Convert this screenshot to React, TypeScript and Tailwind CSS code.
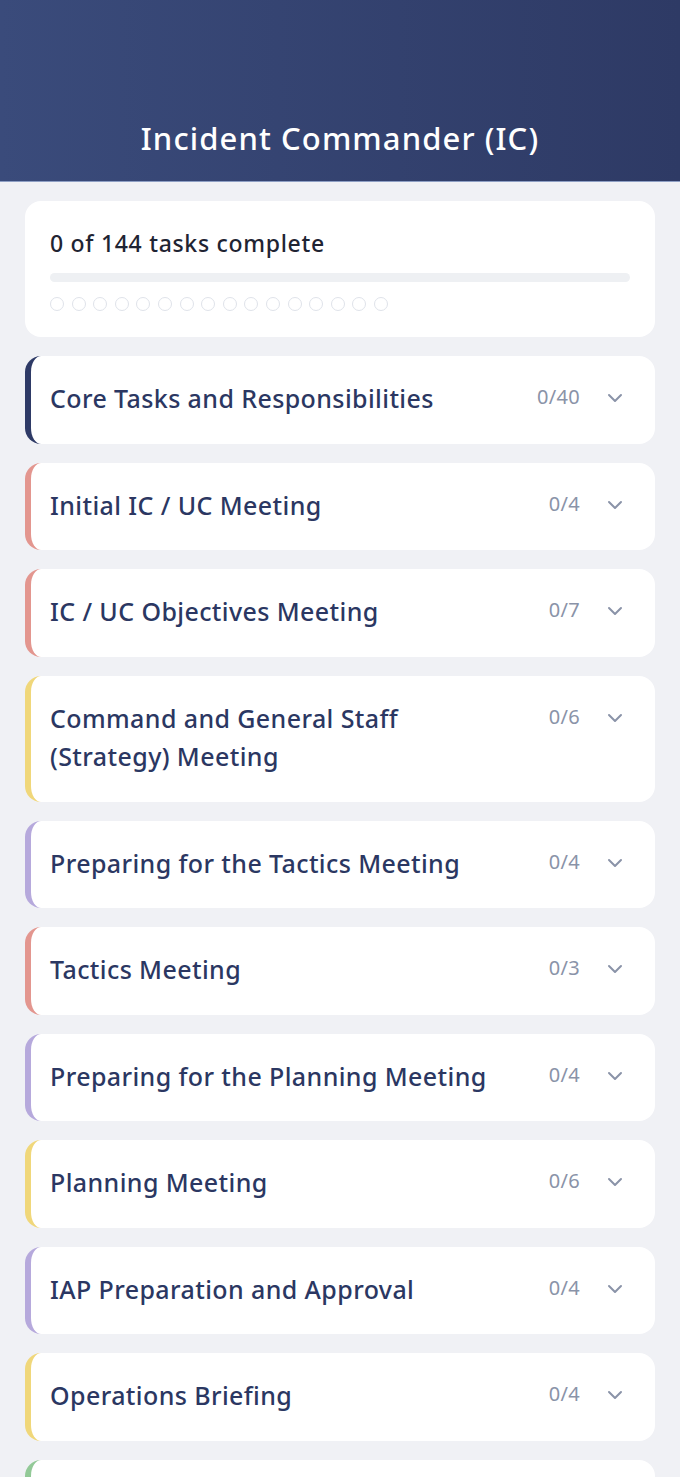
import React from 'react';
import { ChevronDown } from 'lucide-react';

interface Section {
  title: string;
  done: number;
  total: number;
  accent: string;
}

const sections: Section[] = [
  { title: 'Core Tasks and Responsibilities', done: 0, total: 40, accent: 'border-l-[#2e3a66]' },
  { title: 'Initial IC / UC Meeting', done: 0, total: 4, accent: 'border-l-[#e3968f]' },
  { title: 'IC / UC Objectives Meeting', done: 0, total: 7, accent: 'border-l-[#e3968f]' },
  { title: 'Command and General Staff (Strategy) Meeting', done: 0, total: 6, accent: 'border-l-[#f0d77a]' },
  { title: 'Preparing for the Tactics Meeting', done: 0, total: 4, accent: 'border-l-[#b6a9dc]' },
  { title: 'Tactics Meeting', done: 0, total: 3, accent: 'border-l-[#e3968f]' },
  { title: 'Preparing for the Planning Meeting', done: 0, total: 4, accent: 'border-l-[#b6a9dc]' },
  { title: 'Planning Meeting', done: 0, total: 6, accent: 'border-l-[#f0d77a]' },
  { title: 'IAP Preparation and Approval', done: 0, total: 4, accent: 'border-l-[#b6a9dc]' },
  { title: 'Operations Briefing', done: 0, total: 4, accent: 'border-l-[#f0d77a]' },
  { title: 'Assess Progress', done: 0, total: 4, accent: 'border-l-[#92c997]' },
];

const SectionCard: React.FC<{ section: Section }> = ({ section }) => (
  <div
    className={`flex items-start bg-white rounded-2xl border-l-[6px] ${section.accent} pl-[19px] pr-[28px] pt-[23px] pb-[26px]`}
  >
    <p className="flex-1 text-[25px] leading-[38.5px] font-medium tracking-[0.4px] text-[#2b3762] pr-[110px] -mr-[80px]">
      {section.title}
    </p>
    <span className="text-[20px] leading-[38px] tracking-[0.3px] text-[#8a93a8] -mt-[1px]">
      {section.done}/{section.total}
    </span>
    <ChevronDown className="ml-[23px] mt-[7px] h-6 w-6 text-[#8a93a8]" strokeWidth={2} />
  </div>
);

export default function App() {
  return (
    <div
      className="min-h-screen bg-[#f0f1f5]"
      style={{ fontFamily: '"Noto Sans", "Open Sans", sans-serif' }}
    >
      <header className="h-[182px] bg-gradient-to-r from-[#3a4b7b] to-[#2e3a65] border-b border-[#8e9fc4] flex items-end justify-center pb-[20px]">
        <h1 className="text-[31px] font-medium text-white tracking-[1.1px]">Incident Commander (IC)</h1>
      </header>

      <main className="px-[25px] pt-[19px] flex flex-col gap-[19px]">
        <div className="bg-white rounded-2xl px-[25px] pt-[26px] pb-[26px]">
          <p className="text-[23px] leading-[32px] font-medium tracking-[0.7px] text-[#1f2433]">0 of 144 tasks complete</p>
          <div className="mt-[14px] h-[9px] rounded-full bg-[#eef0f3]" />
          <div className="mt-[15px] flex gap-[7.6px]">
            {Array.from({ length: 16 }).map((_, i) => (
              <span key={i} className="w-[14px] h-[14px] rounded-full border-[1.5px] border-[#dfe3ea]" />
            ))}
          </div>
        </div>

        {sections.map((s) => (
          <SectionCard key={s.title} section={s} />
        ))}
      </main>
    </div>
  );
}
